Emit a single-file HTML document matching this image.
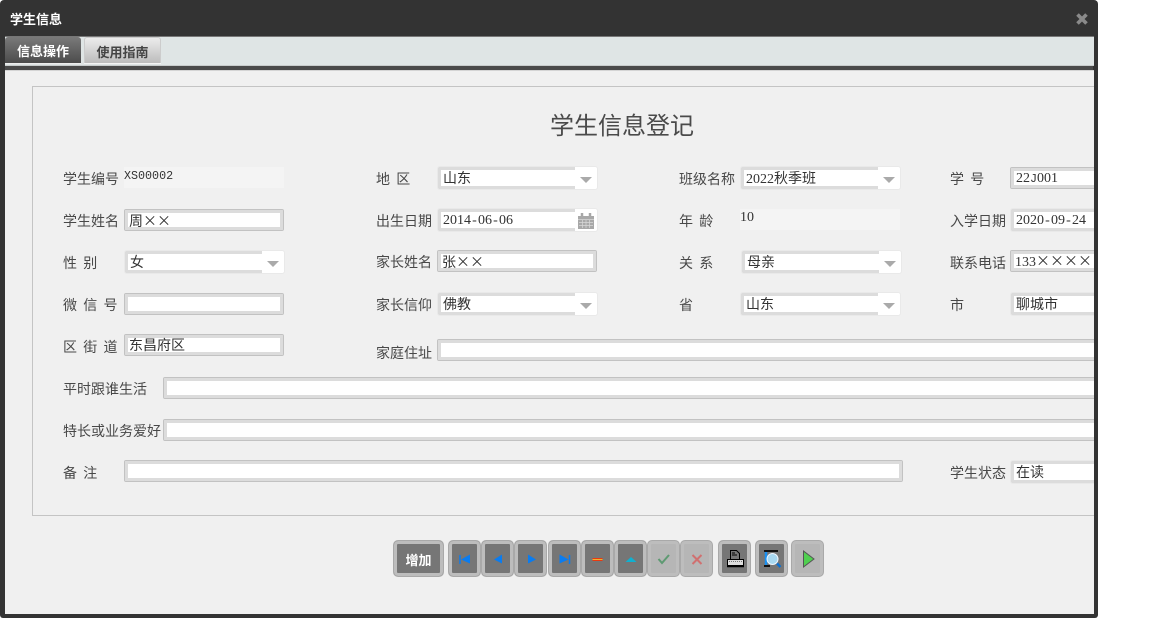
<!DOCTYPE html>
<html lang="zh">
<head>
<meta charset="utf-8">
<title>学生信息</title>
<style>
html,body{margin:0;padding:0;width:1174px;height:618px;overflow:hidden;background:#fff;}
body{font-family:"Liberation Serif","WenQuanYi Zen Hei","Noto Sans CJK SC",sans-serif;font-size:14px;color:#444;position:relative;}
.a{position:absolute;white-space:nowrap;}
#frame{position:absolute;left:0;top:0;width:1098px;height:618px;background:#333;border-radius:4px 4px 3px 3px;}
#tabbar{position:absolute;left:5px;top:36px;width:1089px;height:29px;background:#dfe5e5;border-top:1px solid #777;}
#line{position:absolute;left:5px;top:65px;width:1089px;height:1px;background:#c8cccc;}
#dark{position:absolute;left:5px;top:66px;width:1088px;height:4px;background:#4a4a4a;}
#content{position:absolute;left:5px;top:70px;width:1089px;height:544px;background:#f0f0f0;overflow:hidden;border-top:1px solid #d4d4d4;box-sizing:border-box;}
#main{position:absolute;left:0;top:0;width:1094px;height:618px;overflow:hidden;}
#fs{position:absolute;left:32px;top:86px;width:1062px;height:428px;border:1px solid #c4c4c4;border-right:0;}
.tab{position:absolute;top:37px;height:26px;line-height:27px;text-align:center;font-size:13px;font-weight:bold;font-family:"WenQuanYi Zen Hei","Noto Sans CJK SC",sans-serif;box-sizing:border-box;}
.l{position:absolute;white-space:pre;line-height:18px;height:18px;margin-top:1px;font-family:"WenQuanYi Zen Hei","Noto Sans CJK SC",sans-serif;font-size:14px;color:#484848;}
.i{position:absolute;box-sizing:border-box;height:22px;background:#fff;border:1px solid #c2c2c2;box-shadow:inset 0 0 0 3px #dcdcdc;border-radius:2px;overflow:hidden;white-space:nowrap;line-height:21px;padding-left:4px;color:#333;font-family:"Liberation Serif","WenQuanYi Zen Hei","Noto Sans CJK SC",sans-serif;font-size:14px;}
.s{position:absolute;box-sizing:border-box;height:24px;background:#fff;border:1px solid #e9e9e9;border-radius:3px;overflow:hidden;white-space:nowrap;line-height:23px;padding-left:5px;color:#333;font-family:"Liberation Serif","WenQuanYi Zen Hei","Noto Sans CJK SC",sans-serif;font-size:14px;}
.i.t{line-height:23px}
.s.t{line-height:25px}
.c{font-family:"WenQuanYi Zen Hei","Noto Sans CJK SC",sans-serif;}
.s:before{content:"";position:absolute;left:0;top:0;right:22px;height:3px;background:#dcdcdc;}
.s:after{content:"";position:absolute;left:0;top:0;bottom:0;width:3px;background:#dcdcdc;}
.s i{position:absolute;left:0;right:22px;bottom:0;height:3px;background:#dcdcdc;}
.s.n:before{right:0}.s.n i{right:0}
.s b{position:absolute;right:5px;top:10px;width:0;height:0;border-left:6px solid transparent;border-right:6px solid transparent;border-top:6px solid #aaa;}
.r{position:absolute;box-sizing:border-box;width:160px;height:21px;background:#f4f4f4;line-height:18px;padding-left:0;white-space:nowrap;color:#333;font-family:"Liberation Serif",sans-serif;font-size:14px;}
.m{font-family:"Liberation Mono",monospace;font-size:11.7px;}
.h{display:inline-block;width:7px;text-align:center;}
.b{position:absolute;top:540px;width:33px;height:37px;box-sizing:border-box;background:#767676;border:1px solid #a9a9a9;box-shadow:inset 0 0 0 3px #bdbdbd;border-radius:5px;}
.b.d{background:#b6b6b6;}
.b svg{position:absolute;left:0;top:0;}
</style>
</head>
<body>
<div id="frame"></div>
<div class="a" style="left:10px;top:10px;color:#fff;font-size:13px;font-weight:bold;line-height:18px;font-family:'WenQuanYi Zen Hei','Noto Sans CJK SC',sans-serif;">学生信息</div>
<svg class="a" style="left:1075px;top:12px" width="14" height="14" viewBox="0 0 14 14"><path d="M2.500 2.500L11.500 11.500M11.500 2.500L2.500 11.500" stroke="#8a8a8a" stroke-width="3.600"/></svg>
<div id="tabbar"></div>
<div id="line"></div>
<div class="tab" style="left:5px;width:76px;color:#fff;background:linear-gradient(#7a7a7a,#4c4c4c);border-radius:3px 3px 0 0;">信息操作</div>
<div class="a" style="left:5px;top:63px;width:76px;height:1px;background:#eee;"></div>
<div class="tab" style="left:84px;width:77px;color:#444;background:linear-gradient(#ececec,#bcbcbc);border:1px solid #ccc;border-bottom:0;border-radius:3px 3px 0 0;">使用指南</div>
<div class="a" style="left:84px;top:63px;width:77px;height:1px;background:#f4f4f4;"></div>
<div id="dark"></div>
<div id="content"></div>

<div id="main">
<div id="fs"></div>
<div class="a" style="left:550px;top:108px;font-size:24px;line-height:32px;color:#4a4a4a;font-family:'Noto Sans CJK SC','WenQuanYi Zen Hei',sans-serif;">学生信息登记</div>

<div class="l" style="left:63px;top:169px">学生编号</div>
<div class="r" style="left:124px;top:167px"><span class="m">XS00002</span></div>
<div class="l" style="left:376px;top:169px">地  区</div>
<div class="s t" style="left:437px;top:166px;width:161px">山东<i></i><b></b></div>
<div class="l" style="left:679px;top:169px">班级名称</div>
<div class="s t" style="left:740px;top:166px;width:161px">2022秋季班<i></i><b></b></div>
<div class="l" style="left:950px;top:169px">学  号</div>
<div class="i" style="left:1010px;top:167px;width:100px;padding-left:5px">22<span class="m">J</span>001</div>

<div class="l" style="left:63px;top:211px">学生姓名</div>
<div class="i t" style="left:124px;top:209px;width:160px"><span class="c">周××</span></div>
<div class="l" style="left:376px;top:211px">出生日期</div>
<div class="s" style="left:437px;top:208px;width:161px">2014<span class="h">-</span>06<span class="h">-</span>06<i></i>
<svg class="a" style="left:140px;top:4px" width="16" height="16" viewBox="0 0 16 16"><path d="M0 3h16v13H0z" fill="#a8a8a8"/><path d="M4 0v4M12 0v4" stroke="#a8a8a8" stroke-width="2.500"/><path d="M0 6.500h16M1 9.500h14M1 12.500h14M4.500 7v8M8 7v8M11.500 7v8" stroke="#d8d8d8" stroke-width=".7"/></svg></div>
<div class="l" style="left:679px;top:211px">年  龄</div>
<div class="r" style="left:740px;top:209px">10</div>
<div class="l" style="left:950px;top:211px">入学日期</div>
<div class="s n" style="left:1010px;top:208px;width:100px">2020<span class="h">-</span>09<span class="h">-</span>24<i></i></div>

<div class="l" style="left:63px;top:253px">性  别</div>
<div class="s t" style="left:124px;top:250px;width:161px">女<i></i><b></b></div>
<div class="l" style="left:376px;top:252px">家长姓名</div>
<div class="i t" style="left:437px;top:250px;width:160px"><span class="c">张××</span></div>
<div class="l" style="left:679px;top:253px">关  系</div>
<div class="s t" style="left:741px;top:250px;width:161px">母亲<i></i><b></b></div>
<div class="l" style="left:950px;top:253px">联系电话</div>
<div class="i" style="left:1010px;top:250px;width:100px">133<span class="c">××××</span></div>

<div class="l" style="left:63px;top:295px">微  信  号</div>
<div class="i" style="left:124px;top:293px;width:160px"></div>
<div class="l" style="left:376px;top:295px">家长信仰</div>
<div class="s t" style="left:437px;top:292px;width:161px">佛教<i></i><b></b></div>
<div class="l" style="left:679px;top:295px">省</div>
<div class="s t" style="left:740px;top:292px;width:161px">山东<i></i><b></b></div>
<div class="l" style="left:950px;top:295px">市</div>
<div class="s n t" style="left:1010px;top:292px;width:100px">聊城市<i></i></div>

<div class="l" style="left:63px;top:337px">区  街  道</div>
<div class="i t" style="left:124px;top:334px;width:160px">东昌府区</div>
<div class="l" style="left:376px;top:343px">家庭住址</div>
<div class="i" style="left:437px;top:339px;width:680px"></div>

<div class="l" style="left:63px;top:379px">平时跟谁生活</div>
<div class="i" style="left:163px;top:377px;width:950px"></div>
<div class="l" style="left:63px;top:421px">特长或业务爱好</div>
<div class="i" style="left:163px;top:419px;width:950px"></div>

<div class="l" style="left:63px;top:463px">备  注</div>
<div class="i" style="left:124px;top:460px;width:779px"></div>
<div class="l" style="left:950px;top:463px">学生状态</div>
<div class="s n t" style="left:1010px;top:460px;width:100px">在读<i></i></div>

<div class="b" style="left:393px;width:51px;color:#fff;text-align:center;line-height:38px;font-size:13px;font-weight:bold;font-family:'WenQuanYi Zen Hei','Noto Sans CJK SC',sans-serif;">增加</div>

<div class="b" style="left:448px"><svg width="31" height="35"><path d="M11 14v9" stroke="#0a7cf0" stroke-width="1.500"/><path d="M12 18.500l9-5v9z" fill="#0a7cf0"/></svg></div>
<div class="b" style="left:481px"><svg width="31" height="35"><path d="M12 18.500l8-5v9z" fill="#0a7cf0"/></svg></div>
<div class="b" style="left:514px"><svg width="31" height="35"><path d="M21 18.500l-8-5v9z" fill="#0a7cf0"/></svg></div>
<div class="b" style="left:547.500px"><svg width="31" height="35"><path d="M20.500 14v9" stroke="#0a7cf0" stroke-width="1.500"/><path d="M19.500 18.500l-9-5v9z" fill="#0a7cf0"/></svg></div>
<div class="b" style="left:580.500px"><svg width="31" height="35"><path d="M10.500 17h10v3h-10z" fill="#e83a10"/><path d="M10.500 18h10v1h-10z" fill="#f0b030"/></svg></div>
<div class="b" style="left:613.500px"><svg width="31" height="35"><path d="M10.500 21l5.500-5 5.500 5z" fill="#10b0d0"/></svg></div>
<div class="b d" style="left:646.500px"><svg width="31" height="35"><path d="M10.500 18l3.500 4 7-8" fill="none" stroke="#5e9a72" stroke-width="2"/></svg></div>
<div class="b d" style="left:679.500px"><svg width="31" height="35"><path d="M11.500 14l9 9M20.500 14l-9 9" stroke="#d07070" stroke-width="2"/></svg></div>
<div class="b" style="left:717.500px"><svg width="31" height="35"><path d="M11.500 9.500h6l3 3v6h-9z" fill="#777" stroke="#000"/><path d="M13 12h3M13 14h5" stroke="#000"/><path d="M8.500 18.500h16v6h-16z" fill="#ddd" stroke="#000"/><path d="M10 20.500h13" stroke="#777" stroke-dasharray="1 1"/><path d="M8 25.500h17" stroke="#000" stroke-width="1.500"/></svg></div>
<div class="b" style="left:754.500px"><svg width="31" height="35"><path d="M8 10h14M8 25h6" stroke="#111" stroke-width="2"/><path d="M10 11v13" stroke="#1a90f0" stroke-width="2.500"/><circle cx="16.500" cy="18" r="5.500" fill="#a8d8f0" stroke="#eef6ff"/><path d="M21 22.500l3.500 3.500" stroke="#0a70d0" stroke-width="2.500"/></svg></div>
<div class="b d" style="left:790.500px"><svg width="31" height="35"><path d="M11.500 10l10.500 8-10.500 8z" fill="#50d050" stroke="#555"/></svg></div>
</div>
</body>
</html>
